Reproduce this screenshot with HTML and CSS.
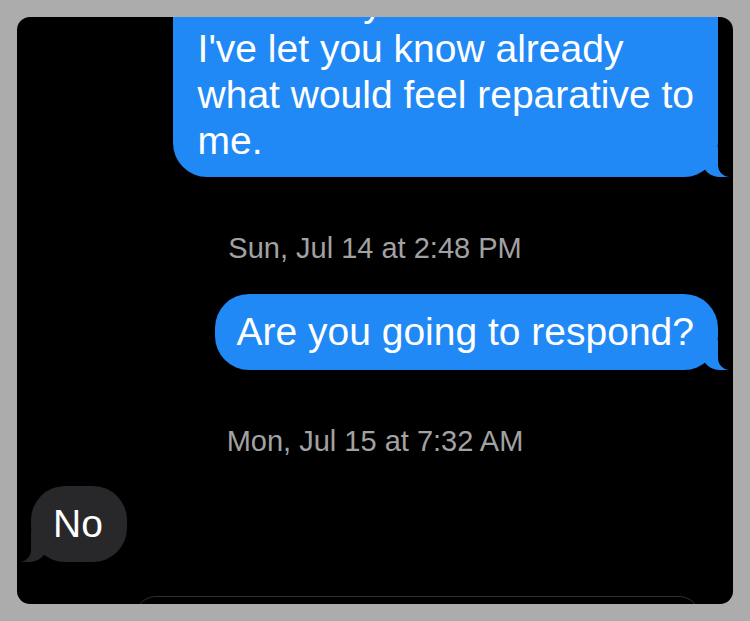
FILE: index.html
```html
<!DOCTYPE html>
<html lang="en">
<head>
  <meta charset="UTF-8">
  <title>Messages</title>
  <meta name="viewport" content="width=device-width, initial-scale=1.0">
  <link rel="stylesheet" href="styles.css">
</head>
<body>

<div class="screen">
  <div class="thread">

    <div class="bubble sent first">
      I've frankly been clear and<br>
      I've let you know already<br>
      what would feel reparative to<br>
      me.
    </div>

    <div class="stamp">Sun, Jul 14 at 2:48 PM</div>

    <div class="bubble sent">Are you going to respond?</div>

    <div class="stamp">Mon, Jul 15 at 7:32 AM</div>

    <div class="bubble received">No</div>

  </div>

  <div class="composer"></div>
</div>

</body>
</html>
```

FILE: styles.css
```css
body {
  margin: 0;
  padding: 17px;
  background-color: #acacac;
  font-family: 'Liberation Sans', Arial, sans-serif;
}

.screen {
  height: 587px;
  background-color: #000;
  border-radius: 13px;
  overflow: hidden;
  display: flex;
  flex-direction: column;
}

.thread {
  flex: 1;
  display: flex;
  flex-direction: column;
}

.bubble {
  position: relative;
  font-size: 39px;
  line-height: 46px;
  color: #fff;
  padding: 15px 24px 15px 22px;
  border-radius: 34px;
}

.sent {
  align-self: flex-end;
  margin-right: 15px;
  margin-top: 29px;
  background-color: #2089f6;
}

.sent.first {
  margin-top: -49px;
  padding: 12px 24px 13px 25px;
}

/* little tails under the bubbles */
.sent::before,
.sent::after,
.received::before,
.received::after {
  content: "";
  position: absolute;
  bottom: 0;
  height: 30px;
}

.sent::before {
  right: -11px;
  width: 27px;
  background-color: #2089f6;
  border-bottom-left-radius: 18px 16px;
}

.sent::after {
  right: -26px;
  width: 26px;
  background-color: #000;
  border-bottom-left-radius: 12px;
}

.received {
  align-self: flex-start;
  margin-left: 14px;
  margin-top: 28px;
  background-color: #28282b;
}

.received::before {
  left: -10px;
  width: 26px;
  background-color: #28282b;
  border-bottom-right-radius: 18px 16px;
}

.received::after {
  left: -26px;
  width: 26px;
  background-color: #000;
  border-bottom-right-radius: 12px;
}

.stamp {
  margin-top: 54px;
  text-align: center;
  font-size: 29px;
  line-height: 34px;
  color: #a2a2a2;
}

.stamp + .bubble {
  margin-top: 29px;
}

.bubble + .stamp + .bubble.received {
  margin-top: 28px;
}

.composer {
  height: 40px;
  margin: 0 33px -34px 118px;
  border: 1px solid #2f2f31;
  border-radius: 22px;
}
```
